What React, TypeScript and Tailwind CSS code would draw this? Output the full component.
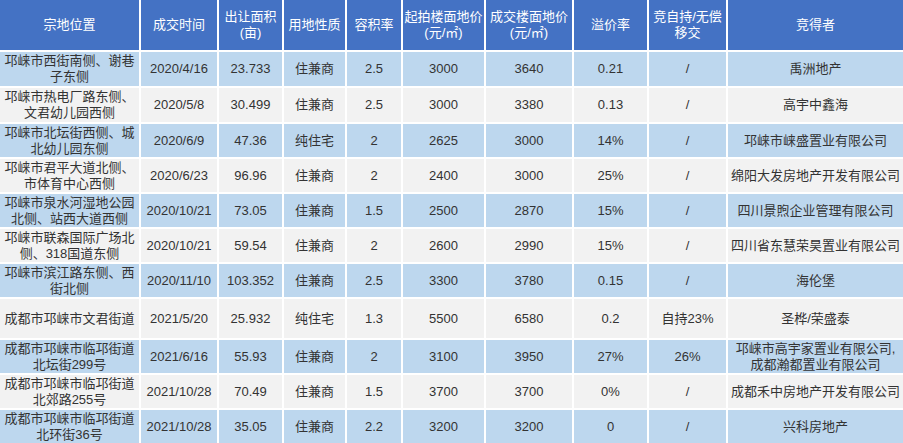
const headers = [
    "宗地位置",
    "成交时间",
    "出让面积\n(亩)",
    "用地性质",
    "容积率",
    "起拍楼面地价\n(元/㎡)",
    "成交楼面地价\n(元/㎡)",
    "溢价率",
    "竞自持/无偿\n移交",
    "竞得者",
];

type Row = {
    h: string;
    cells: string[];
};

const rows: Row[] = [
    { h: "h-[34px]", cells: ["邛崃市西街南侧、谢巷\n子东侧", "2020/4/16", "23.733", "住兼商", "2.5", "3000", "3640", "0.21", "/", "禹洲地产"] },
    { h: "h-[34px]", cells: ["邛崃市热电厂路东侧、\n文君幼儿园西侧", "2020/5/8", "30.499", "住兼商", "2.5", "3000", "3380", "0.13", "/", "高宇中鑫海"] },
    { h: "h-[33px]", cells: ["邛崃市北坛街西侧、城\n北幼儿园东侧", "2020/6/9", "47.36", "纯住宅", "2", "2625", "3000", "14%", "/", "邛崃市崃盛置业有限公司"] },
    { h: "h-[33px]", cells: ["邛崃市君平大道北侧、\n市体育中心西侧", "2020/6/23", "96.96", "住兼商", "2", "2400", "3000", "25%", "/", "绵阳大发房地产开发有限公司"] },
    { h: "h-[33px]", cells: ["邛崃市泉水河湿地公园\n北侧、站西大道西侧", "2020/10/21", "73.05", "住兼商", "1.5", "2500", "2870", "15%", "/", "四川景煦企业管理有限公司"] },
    { h: "h-[33px]", cells: ["邛崃市联森国际广场北\n侧、318国道东侧", "2020/10/21", "59.54", "住兼商", "2", "2600", "2990", "15%", "/", "四川省东慧荣昊置业有限公司"] },
    { h: "h-[33px]", cells: ["邛崃市滨江路东侧、西\n街北侧", "2020/11/10", "103.352", "住兼商", "2.5", "3300", "3780", "0.15", "/", "海伦堡"] },
    { h: "h-[39px]", cells: ["成都市邛崃市文君街道", "2021/5/20", "25.932", "纯住宅", "1.3", "5500", "6580", "0.2", "自持23%", "圣桦/荣盛泰"] },
    { h: "h-[33px]", cells: ["成都市邛崃市临邛街道\n北坛街299号", "2021/6/16", "55.93", "住兼商", "2", "3100", "3950", "27%", "26%", "邛崃市高宇家置业有限公司,\n成都瀚都置业有限公司"] },
    { h: "h-[33px]", cells: ["成都市邛崃市临邛街道\n北郊路255号", "2021/10/28", "70.49", "住兼商", "1.5", "3700", "3700", "0%", "/", "成都禾中房地产开发有限公司"] },
    { h: "h-[33px]", cells: ["成都市邛崃市临邛街道\n北环街36号", "2021/10/28", "35.05", "住兼商", "2.2", "3200", "3200", "0", "/", "兴科房地产"] },
];

const LandTable = () => {
    return (
        <div className="w-[903px] h-[443px] bg-white overflow-hidden font-['Liberation_Sans','Noto_Sans_CJK_SC',sans-serif] text-[13px] leading-[16px]">
            <div className="grid grid-cols-[139px_76px_63px_61px_54px_81px_86px_73px_77px_175px] gap-[2px]">
                {headers.map((t) => (
                    <div key={t} className="h-[50px] bg-[#4472c4] text-white flex items-center justify-center text-center whitespace-pre-line">
                        {t}
                    </div>
                ))}
                {rows.map((r, i) =>
                    r.cells.map((c, j) => (
                        <div
                            key={`${i}-${j}`}
                            className={`${r.h} ${i % 2 == 0 ? "bg-[#bdd7ee]" : "bg-[#f2f2f2]"} text-[#333333] flex items-center justify-center text-center whitespace-pre-line`}
                        >
                            {c}
                        </div>
                    ))
                )}
            </div>
        </div>
    );
};

export default function App() {
    return <LandTable />;
}
